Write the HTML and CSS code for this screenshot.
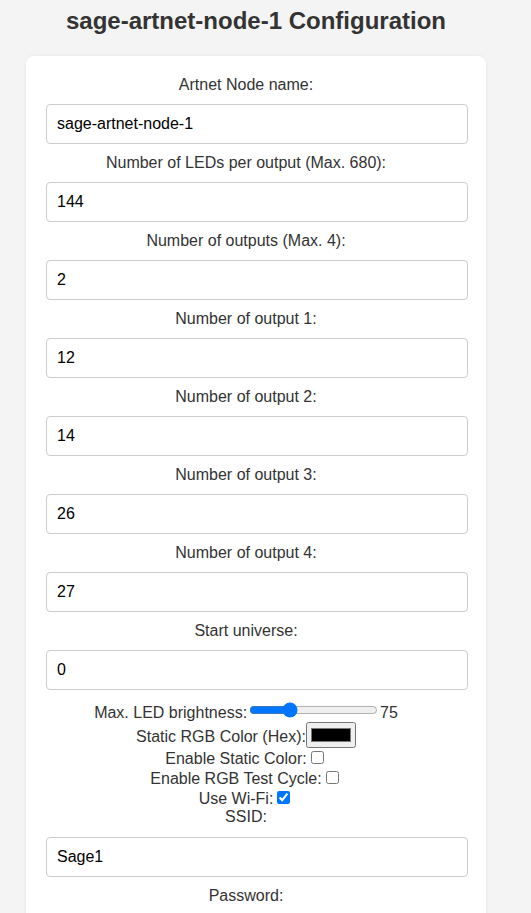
FILE: index.html
```html
<!DOCTYPE html>
<html>
<head>
<meta charset="utf-8">
<title>sage-artnet-node-1 Configuration</title>
<link rel="stylesheet" href="styles.css">
</head>
<body>
<div class="page">
  <h1 class="title">sage-artnet-node-1 Configuration</h1>
  <form class="card">
    <label class="field-label" for="name">Artnet Node name:</label>
    <input class="text-input" id="name" type="text" value="sage-artnet-node-1">
    <label class="field-label" for="leds">Number of LEDs per output (Max. 680):</label>
    <input class="text-input" id="leds" type="text" value="144">
    <label class="field-label" for="outs">Number of outputs (Max. 4):</label>
    <input class="text-input" id="outs" type="text" value="2">
    <label class="field-label" for="o1">Number of output 1:</label>
    <input class="text-input" id="o1" type="text" value="12">
    <label class="field-label" for="o2">Number of output 2:</label>
    <input class="text-input" id="o2" type="text" value="14">
    <label class="field-label" for="o3">Number of output 3:</label>
    <input class="text-input" id="o3" type="text" value="26">
    <label class="field-label" for="o4">Number of output 4:</label>
    <input class="text-input" id="o4" type="text" value="27">
    <label class="field-label" for="uni">Start universe:</label>
    <input class="text-input" id="uni" type="text" value="0">
    <div class="inline-rows">
      <label for="bright">Max. LED brightness:</label><input class="range" id="bright" type="range" min="0" max="255" value="75"><span>75</span><br>
      <label for="color">Static RGB Color (Hex):</label><input class="color" id="color" type="color" value="#000000"><br>
      <label for="static">Enable Static Color:</label><input class="check" id="static" type="checkbox"><br>
      <label for="cycle">Enable RGB Test Cycle:</label><input class="check" id="cycle" type="checkbox"><br>
      <label for="wifi">Use Wi-Fi:</label><input class="check" id="wifi" type="checkbox" checked><br>
      <label for="ssid">SSID:</label>
    </div>
    <input class="text-input" id="ssid" type="text" value="Sage1">
    <label class="field-label" for="pw">Password:</label>
    <input class="text-input" id="pw" type="password" value="password">
  </form>
</div>
</body>
</html>
```
FILE: styles.css
```css
html, body {
  margin: 0;
  padding: 0;
  background: #f4f4f4;
}
body {
  font-family: "Liberation Sans", Arial, sans-serif;
  color: #333;
}
.page {
  width: 460px;
  margin-left: 26px;
  padding-top: 7px;
}
.title {
  margin: 0 0 21px;
  font-size: 24px;
  line-height: 28px;
  text-align: center;
  color: #333;
}
.card {
  background: #fff;
  border-radius: 8px;
  box-shadow: 0 0 4px rgba(0, 0, 0, 0.06);
  padding: 20px 40px 20px 20px;
  text-align: center;
}
.field-label {
  display: block;
  font-size: 16px;
  line-height: 18px;
  margin-bottom: 10px;
}
.text-input {
  display: block;
  box-sizing: border-box;
  width: calc(100% + 22px);
  height: 40px;
  margin: 0 0 10px;
  padding: 0 10px;
  border: 1px solid #ccc;
  border-radius: 4px;
  font-family: "Liberation Sans", Arial, sans-serif;
  font-size: 16px;
  color: #000;
  background: #fff;
}
.inline-rows {
  font-size: 16px;
  margin-bottom: 11px;
}
.range {
  width: 129px;
}
.color {
  width: 50px;
  height: 26px;
}
.check {
  width: 13px;
  height: 13px;
}
```
